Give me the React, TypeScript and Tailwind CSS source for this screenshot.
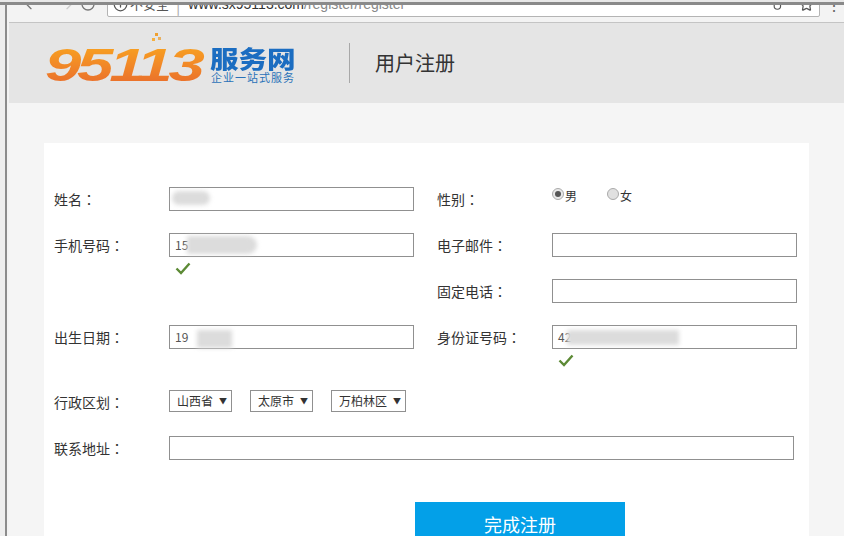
import { ArrowLeft, ArrowRight, RotateCw, Info, Star, Key } from 'lucide-react';

const cjk = { fontFamily: '"Noto Sans CJK SC", "Liberation Sans", sans-serif' };

function Check() {
  return (
    <svg width="16" height="13" viewBox="0 0 16 13" className="block">
      <path d="M1.5 6.5 L6 11 L14.5 1.5" fill="none" stroke="#5c8a35" strokeWidth="2.4" />
    </svg>
  );
}

function Blur({ className }: { className: string }) {
  return <span className={`absolute block bg-[#dcdcdc] blur-[2px] ${className}`} />;
}

function Label({ text }: { text: string }) {
  return (
    <label className="w-[115px] shrink-0 whitespace-nowrap pt-[2px] text-[14px] leading-[20px] text-[#333]">
      {text}
      <span className="font-['Noto_Sans_CJK_TC']">：</span>
    </label>
  );
}

function Field({
  label,
  width = 'w-[245px]',
  children,
}: {
  label: string;
  width?: string;
  children?: React.ReactNode;
}) {
  return (
    <div className="flex shrink-0 items-start">
      <Label text={label} />
      <div className={`relative h-[24px] shrink-0 ${width} border border-[#909090] bg-white pl-[5px] text-[12px] leading-[22px] text-[#555]`}>
        {children}
      </div>
    </div>
  );
}

function Select({ text, width }: { text: string; width: string }) {
  return (
    <div className={`flex h-[22px] ${width} shrink-0 items-center gap-[6px] border border-[#909090] bg-white pl-[7px] text-[12px] text-[#333]`}>
      <span className="whitespace-nowrap">{text}</span>
      <span className="text-[8px]">▼</span>
    </div>
  );
}

export default function App() {
  return (
    <div className="flex h-[536px] w-[844px] overflow-hidden bg-[#f5f5f5]" style={cjk}>
      <div className="flex w-[9px] shrink-0">
        <div className="w-[5px] bg-[#eeeeee]" />
        <div className="w-[2px] bg-[#8c8c8c]" />
        <div className="w-[2px] bg-[#f3f3f3]" />
      </div>

      <div className="flex min-w-0 flex-1 flex-col">
        {/* browser bar, cut off at the top of the photo */}
        <div className="-ml-[9px] h-[2px] w-[844px] shrink-0 bg-[#e8e8e8]" />
        <div className="-ml-[9px] h-[3px] w-[844px] shrink-0 bg-[#8a8a8a]" />
        <div className="flex h-[18px] shrink-0 items-end overflow-hidden border-b border-[#c4c4c4] bg-[#f3f3f3] text-[#777]">
          <div className="flex w-[98px] shrink-0 items-center pb-[10px] pl-[14px]">
            <ArrowLeft size={16} strokeWidth={2} className="shrink-0" />
            <ArrowRight size={16} strokeWidth={2} className="ml-[20px] shrink-0 text-[#ccc]" />
            <RotateCw size={16} strokeWidth={2} className="ml-[5px] shrink-0" />
          </div>
          <div className="mb-[5px] flex h-[26px] w-[713px] shrink-0 items-center rounded-[2px] border border-[#b4b4b4] bg-white pl-[5px]">
            <Info size={15} className="shrink-0 text-[#555]" />
            <span className="ml-[2px] whitespace-nowrap text-[13px] text-[#555]">不安全</span>
            <span className="ml-[7px] text-[#aaa]">|</span>
            <span className="ml-[8px] whitespace-nowrap text-[14px] text-[#333]" style={{ fontFamily: '"Liberation Sans", sans-serif' }}>
              www.sx95113.com<span className="text-[#888]">/register/register</span>
            </span>
            <Key size={14} className="ml-auto shrink-0 text-[#555]" />
            <Star size={15} className="ml-[12px] mr-[5px] shrink-0 text-[#555]" />
          </div>
          <span className="ml-auto mr-[2px] pb-[6px] text-[#666]">⋮</span>
        </div>

        {/* header */}
        <header className="flex h-[80px] shrink-0 items-center bg-[#e5e5e5] pl-[36px]">
          <div className="flex w-[304px] shrink-0 items-center">
            <div className="relative mt-[4px] h-[46px] w-[165px] shrink-0">
              <span
                className="block origin-left scale-x-[1.42] bg-linear-to-b from-[#f9a61e] to-[#e8692c] bg-clip-text text-[46px] leading-[46px] font-bold tracking-[-3px] text-transparent italic"
                style={{ fontFamily: '"Liberation Sans", sans-serif' }}
              >
                95113
              </span>
              <svg width="14" height="12" viewBox="0 0 14 12" className="absolute top-[-9px] left-[105px]">
                <rect x="5" y="0" width="3" height="3" fill="#f0a030" />
                <rect x="8" y="4" width="3" height="3" fill="#e8b060" />
                <rect x="2" y="5" width="3" height="3" fill="#f5b040" />
              </svg>
            </div>
            <div className="mt-[4px] flex w-[88px] shrink-0 flex-col">
              <span className="block origin-left scale-x-[1.19] whitespace-nowrap text-[24px] leading-[23px] font-black text-[#1b6dc1]">服务网</span>
              <span className="ml-px mt-px whitespace-nowrap text-[11px] leading-[14px] tracking-[1px] text-[#2a72b8]">企业一站式服务</span>
            </div>
          </div>
          <div className="h-[40px] w-px shrink-0 bg-[#a8a8a8]" />
          <h1 className="ml-[25px] whitespace-nowrap text-[20px] font-normal text-[#333]">用户注册</h1>
        </header>

        {/* form card */}
        <main className="mt-[40px] ml-[35px] flex min-h-0 w-[765px] flex-1 flex-col overflow-hidden bg-white pt-[44px] pl-[10px]">
          <div className="flex h-[46px] shrink-0 gap-[23px]">
            <Field label="姓名">
              <Blur className="top-[3px] left-[2px] h-[14px] w-[38px] rounded-full" />
            </Field>
            <div className="flex shrink-0">
              <Label text="性别" />
              <div className="flex items-start text-[12px] leading-[16px] text-[#333]">
                <span className="mt-px flex h-[12px] w-[12px] items-center justify-center rounded-full border border-[#aaa] bg-[#e8e8e8]">
                  <span className="h-[6px] w-[6px] rounded-full bg-[#555]" />
                </span>
                <span className="ml-px mt-[1px]">男</span>
                <span className="mt-px ml-[30px] h-[12px] w-[12px] rounded-full border border-[#aaa] bg-[#e0e0e0]" />
                <span className="ml-px mt-[1px]">女</span>
              </div>
            </div>
          </div>

          <div className="relative flex h-[46px] shrink-0 gap-[23px]">
            <Field label="手机号码">
              15
              <Blur className="top-[2px] left-[17px] h-[18px] w-[70px] rounded-r-full" />
            </Field>
            <Field label="电子邮件" />
            <div className="absolute top-[29px] left-[121px]">
              <Check />
            </div>
          </div>

          <div className="flex h-[46px] shrink-0 gap-[23px]">
            <div className="w-[360px] shrink-0" />
            <Field label="固定电话" />
          </div>

          <div className="relative flex h-[65px] shrink-0 gap-[23px]">
            <Field label="出生日期">
              19
              <Blur className="top-[4px] left-[27px] h-[18px] w-[35px]" />
            </Field>
            <Field label="身份证号码">
              42
              <Blur className="top-[4px] left-[14px] h-[15px] w-[112px]" />
            </Field>
            <div className="absolute top-[29px] left-[504px]">
              <Check />
            </div>
          </div>

          <div className="flex h-[46px] shrink-0 items-start">
            <Label text="行政区划" />
            <div className="flex">
              <Select text="山西省" width="w-[63px]" />
              <div className="ml-[18px]">
                <Select text="太原市" width="w-[63px]" />
              </div>
              <div className="ml-[18px]">
                <Select text="万柏林区" width="w-[75px]" />
              </div>
            </div>
          </div>

          <div className="flex h-[66px] shrink-0 items-start">
            <Field label="联系地址" width="w-[625px]" />
          </div>

          <div className="shrink-0 pl-[361px]">
            <button className="h-[60px] w-[210px] bg-[#03a0e8] pb-[16px] text-[18px] text-white">
              完成注册
            </button>
          </div>
        </main>
      </div>
    </div>
  );
}
